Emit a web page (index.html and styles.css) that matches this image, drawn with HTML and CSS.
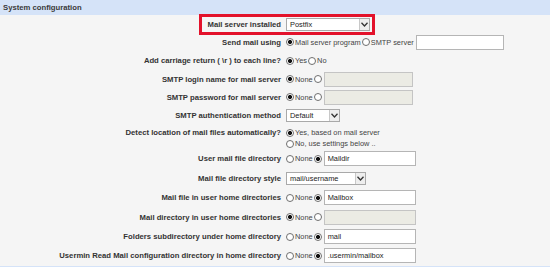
FILE: index.html
```html
<!DOCTYPE html>
<html>
<head>
<meta charset="utf-8">
<link rel="stylesheet" href="styles.css">
</head>
<body>
<div class="page">
  <div class="head">System configuration</div>
  <div class="form">
    <div class="row">
      <div class="lbl">Mail server installed</div>
      <div class="ctl"><span class="sel w84"><span class="val">Postfix</span><span class="arr"><svg width="7" height="5" viewBox="0 0 7 5"><path d="M0.5 0.8 L3.5 4 L6.5 0.8" fill="none" stroke="#333" stroke-width="1.3"/></svg></span></span></div>
    </div>
    <div class="row">
      <div class="lbl">Send mail using</div>
      <div class="ctl"><span class="rad on"></span><span class="opt">Mail server program</span><span class="rad"></span><span class="opt">SMTP server</span><span class="txt w88"></span></div>
    </div>
    <div class="row">
      <div class="lbl">Add carriage return ( \r ) to each line?</div>
      <div class="ctl"><span class="rad on"></span><span class="opt">Yes</span><span class="rad"></span><span class="opt">No</span></div>
    </div>
    <div class="row">
      <div class="lbl">SMTP login name for mail server</div>
      <div class="ctl"><span class="rad on"></span><span class="opt">None</span><span class="rad"></span><span class="txt dis w89"></span></div>
    </div>
    <div class="row">
      <div class="lbl">SMTP password for mail server</div>
      <div class="ctl"><span class="rad on"></span><span class="opt">None</span><span class="rad"></span><span class="txt dis w89"></span></div>
    </div>
    <div class="row">
      <div class="lbl">SMTP authentication method</div>
      <div class="ctl"><span class="sel w54"><span class="val">Default</span><span class="arr"><svg width="7" height="5" viewBox="0 0 7 5"><path d="M0.5 0.8 L3.5 4 L6.5 0.8" fill="none" stroke="#333" stroke-width="1.3"/></svg></span></span></div>
    </div>
    <div class="row multi">
      <div class="lbl">Detect location of mail files automatically?</div>
      <div class="ctl col">
        <div class="line"><span class="rad on"></span><span class="opt">Yes, based on mail server</span></div>
        <div class="line"><span class="rad"></span><span class="opt">No, use settings below ..</span></div>
      </div>
    </div>
    <div class="row tall">
      <div class="lbl">User mail file directory</div>
      <div class="ctl"><span class="rad"></span><span class="opt">None</span><span class="rad on"></span><span class="txt w91"><span class="val">Maildir</span></span></div>
    </div>
    <div class="row tall">
      <div class="lbl">Mail file directory style</div>
      <div class="ctl"><span class="sel w80"><span class="val">mail/username</span><span class="arr"><svg width="7" height="5" viewBox="0 0 7 5"><path d="M0.5 0.8 L3.5 4 L6.5 0.8" fill="none" stroke="#333" stroke-width="1.3"/></svg></span></span></div>
    </div>
    <div class="row tall">
      <div class="lbl">Mail file in user home directories</div>
      <div class="ctl"><span class="rad"></span><span class="opt">None</span><span class="rad on"></span><span class="txt w91"><span class="val">Mailbox</span></span></div>
    </div>
    <div class="row tall">
      <div class="lbl">Mail directory in user home directories</div>
      <div class="ctl"><span class="rad on"></span><span class="opt">None</span><span class="rad"></span><span class="txt dis w91"></span></div>
    </div>
    <div class="row tall">
      <div class="lbl">Folders subdirectory under home directory</div>
      <div class="ctl"><span class="rad"></span><span class="opt">None</span><span class="rad on"></span><span class="txt w91"><span class="val">mail</span></span></div>
    </div>
    <div class="row tall">
      <div class="lbl">Usermin Read Mail configuration directory in home directory</div>
      <div class="ctl"><span class="rad"></span><span class="opt">None</span><span class="rad on"></span><span class="txt w91"><span class="val">.usermin/mailbox</span></span></div>
    </div>
  </div>
  <div class="foot"></div>
  <div class="mark"></div>
</div>
</body>
</html>
```

FILE: styles.css
```css
html, body {
  margin: 0;
  padding: 0;
  background: #f5f5f5;
}
.page {
  position: relative;
  width: 550px;
  height: 267px;
  overflow: hidden;
  font-family: "Liberation Sans", Arial, sans-serif;
  color: #333;
}
.head {
  height: 15px;
  line-height: 15px;
  background: #d5e3f8;
  font-size: 7.7px;
  font-weight: bold;
  padding-left: 3px;
  color: #3a3a3a;
}
.form {
  display: flex;
  flex-direction: column;
}
.row {
  display: grid;
  grid-template-columns: 281px 1fr;
  column-gap: 5px;
  height: 18.3px;
  align-items: center;
}
.row.multi {
  height: 24.5px;
  align-items: start;
  padding-top: 2.5px;
  box-sizing: border-box;
}
.row.multi .lbl {
  line-height: 11px;
}
.row.tall {
  height: 19.4px;
}
.lbl {
  text-align: right;
  font-size: 7.7px;
  font-weight: bold;
  color: #333;
  white-space: nowrap;
}
.ctl {
  display: flex;
  align-items: center;
  font-size: 7.4px;
  color: #444;
  white-space: nowrap;
}
.ctl.col {
  flex-direction: column;
  align-items: flex-start;
}
.line {
  display: flex;
  align-items: center;
  height: 11px;
}
.rad {
  display: inline-block;
  box-sizing: border-box;
  width: 8px;
  height: 8px;
  border: 1px solid #6f6f6f;
  border-radius: 50%;
  background: #fff;
  margin-right: 1px;
  flex: none;
}
.rad.on {
  background: radial-gradient(circle, #111 0, #111 1.8px, #fff 2.3px);
}
.opt {
  margin-right: 1px;
}
.txt {
  display: inline-flex;
  align-items: center;
  box-sizing: border-box;
  height: 15px;
  background: #fff;
  border: 1px solid #b5b5b5;
  margin-left: 1px;
  padding-left: 3px;
  font-size: 7.4px;
  color: #222;
}
.txt.dis {
  background: #ebebe4;
  border-color: #c4c4c4;
}
.w88 { width: 88px; }
.w89 { width: 89px; }
.w91 { width: 92px; }
.sel {
  display: inline-flex;
  align-items: stretch;
  box-sizing: border-box;
  height: 13px;
  background: #fff;
  border: 1px solid #a9a9a9;
  font-size: 7.4px;
  color: #222;
}
.sel .val {
  flex: 1;
  padding-left: 3px;
  line-height: 11px;
}
.sel .arr {
  width: 9px;
  border-left: 1px solid #c8c8c8;
  background: #eeeeee;
  display: flex;
  align-items: center;
  justify-content: center;
}
.w84 { width: 84px; }
.w54 { width: 54px; }
.w80 { width: 80px; }
.foot {
  height: 3px;
  background: #d5e3f8;
  margin-top: 0;
}
.mark {
  position: absolute;
  left: 199px;
  top: 14px;
  width: 176px;
  height: 21px;
  box-sizing: border-box;
  border: 3px solid #e3122b;
}
```
